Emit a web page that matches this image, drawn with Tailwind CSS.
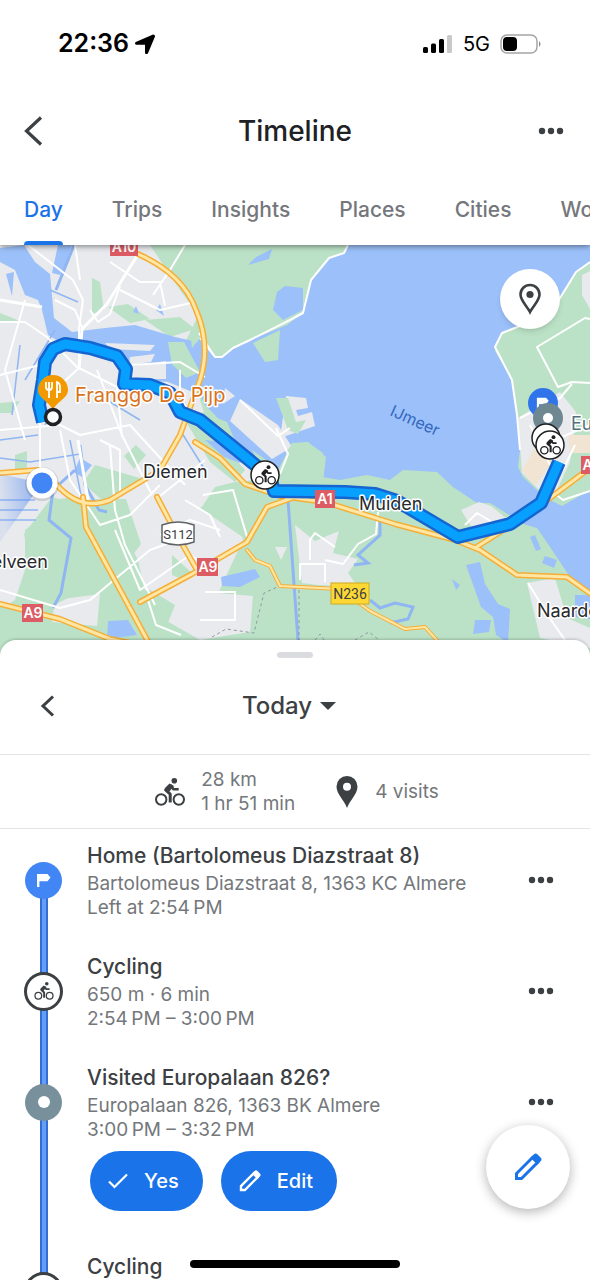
<!DOCTYPE html>
<html lang="en">

<head>
  <meta charset="UTF-8" />
  <meta name="viewport" content="width=device-width, initial-scale=1" />
  <title>Timeline</title>
  <script src="https://cdn.jsdelivr.net/npm/@tailwindcss/browser@4"></script>
</head>

<body class="bg-white font-['Inter','Liberation_Sans',sans-serif] text-[#3c4043]">
  <!-- Shared icons -->
  <svg class="hidden">
    <symbol id="bike" viewBox="0 0 30 28">
      <g fill="none" stroke="currentColor" stroke-linejoin="round">
        <circle cx="6.200" cy="21.5" r="5.200" stroke-width="2" />
        <circle cx="23.800" cy="21.5" r="5.200" stroke-width="2" />
        <path d="M15.5 7.2L10.6 12l4.6 4.2V24.500" stroke-width="3" />
        <path d="M15.5 7l3 4.2h5.2" stroke-width="2.600" />
      </g>
      <path d="M9.500 10.500l5-5 4.500 2.500-5 6z" fill="currentColor" />
      <circle cx="19.300" cy="2.800" r="2.800" fill="currentColor" />
    </symbol>
    <symbol id="dots" viewBox="0 0 26 8">
      <g fill="currentColor">
        <circle cx="4" cy="4" r="3.200" />
        <circle cx="13" cy="4" r="3.200" />
        <circle cx="22" cy="4" r="3.200" />
      </g>
    </symbol>
    <symbol id="pencil" viewBox="0 0 28 28">
      <path d="M2.500 25.500v-5L18.500 4.500l5 5-16 16z" fill="none" stroke="currentColor" stroke-width="3" />
      <path d="M16.500 4.600l3.300-3.200a2.600 2.600 0 0 1 3.700 0l3.100 3.100a2.600 2.600 0 0 1 0 3.700l-3.200 3.300z" fill="currentColor" />
    </symbol>
    <symbol id="flag" viewBox="0 0 16 16">
      <path d="M1 2h10.500l3 3.500-3 3.800H3.400V15H1z" fill="currentColor" />
    </symbol>
  </svg>

  <div class="relative flex h-screen flex-col overflow-hidden">
    <header class="relative z-10 bg-white shadow-[0_1px_6px_rgba(0,0,0,0.5)]">
      <!-- Status bar -->
      <div class="flex h-22 items-center justify-between pr-12 pl-[58px] text-black">
        <div class="flex items-center gap-1">
          <span class="text-[25px] font-semibold">22:36</span>
          <svg class="size-6" viewBox="0 0 24 24">
            <path d="M19.500 2.800a1.700 1.700 0 0 1 2.300 2.300L15.100 20.900c-.800 1.800-3.100 1.500-3.100-.500v-7.600H3.900c-2.100 0-2.500-2.300-.600-3.100z" fill="currentColor" />
          </svg>
        </div>
        <div class="flex items-center gap-2">
          <svg class="h-5 w-8" viewBox="0 0 32 20">
            <rect y="13" width="5" height="6" rx="1.500" />
            <rect x="8" y="9.500" width="5" height="9.500" rx="1.500" />
            <rect x="16" y="5" width="5" height="14" rx="1.500" />
            <rect x="24" y="1" width="5" height="18" rx="1.500" fill="#c9c9cb" />
          </svg>
          <span class="text-xl">5G</span>
          <svg class="h-6 w-11" viewBox="0 0 44 24">
            <rect x="3" y="3" width="36" height="18" rx="6" fill="none" stroke="#a5a5a8" stroke-width="1.500" />
            <rect x="5" y="5" width="14" height="14" rx="4" />
            <path d="M41 9q3 3 0 6z" fill="#8c8c90" />
          </svg>
        </div>
      </div>

      <!-- Title bar -->
      <div class="flex h-[86px] items-center justify-between px-6">
        <button class="w-8" aria-label="Back">
          <svg class="h-8 w-5" viewBox="0 0 20 32">
            <path d="M17 2.500L2.500 16l14.500 13.500" fill="none" stroke="currentColor" stroke-width="3.200" />
          </svg>
        </button>
        <h1 class="text-[28px] font-medium text-[#202124]">Timeline</h1>
        <button class="w-8" aria-label="More options"><svg class="ml-1 h-2 w-[26px]"><use href="#dots" /></svg></button>
      </div>

      <!-- Tabs -->
      <nav class="flex h-[71px] gap-[49px] overflow-hidden px-6 text-[21px] font-medium whitespace-nowrap text-[#74777b]">
        <a href="#" class="relative flex items-center text-[#1a73e8]">Day
          <span class="absolute inset-x-0 bottom-0 h-1 rounded-t bg-[#1a73e8]"></span>
        </a>
        <a href="#" class="flex items-center">Trips</a>
        <a href="#" class="flex items-center">Insights</a>
        <a href="#" class="flex items-center">Places</a>
        <a href="#" class="flex items-center">Cities</a>
        <a href="#" class="flex items-center">World</a>
      </nav>
    </header>

    <!-- Map -->
    <section class="relative shrink-0" aria-label="Map">
      <svg class="block w-full" viewBox="0 245 590 411">
        <defs>
          <linearGradient id="beam" x1="1" y1="0" x2="0" y2="0.200">
            <stop offset="0" stop-color="#5b8ef0" stop-opacity="0.700" />
            <stop offset="1" stop-color="#5b8ef0" stop-opacity="0.100" />
          </linearGradient>
        </defs>
        <rect y="245" width="590" height="411" fill="#bbe2c6" />

        <!-- Built-up areas -->
        <g fill="#e8eaed">
          <path d="M0 245H150L180 290 196 312 196 320 184 345 206 375 200 400 208 425 250 466 256 480 235 482 215 487 200 510 235 505 243 540 215 600 205 600 250 605 246 632 200 640 165 620 160 605 147 600 138 560 130 545 115 525 95 500 75 497 52 500 45 515 25 530 25 570 15 600 0 610Z" />
          <path d="M55 600l45-6-3 32-45-4zM205 592l48 4-3 36-40 6zM295 525l20 16 24-10-6 22 25 6-10 14 10 14-40-2-16-2zM275 547h12l-6 13zM527 583l28-5 12 40 23 10v20l-50-10z" />
        </g>

        <!-- Parks -->
        <g fill="#bbe2c6">
          <path d="M92 278l8 4 4 28-12 4zM108 307l20-3 22 15-20 4zM0 313l20 8-22 2zM0 403l20-2-8 12H0zM145 320l35-3 15 12-25 8zM15 455l12-4v18l-12 2zM124 456l12-11 10 10-12 14zM95 465l48 14-40 22-20-18zM52 497l22 6 22-4 30 0 15 45-15 20-30 20-40 20-20-10-12-60zM150 590l25 15-10 25 20 25h-60l-20-60zM0 605l45 30v20H0zM185 420l20 5 40 45-10 12-25-20zM200 508l22-15 18 15 4 30zM172 555l20 18-10 6-10-4z" />
        </g>

        <!-- Water -->
        <g fill="#9cc0f9">
          <path d="M0 248L24 245 35 262 50 274 54 318 72 332 105 328 135 325 175 337 197 342 200 335 206 345 215 357 222 357 233 348 250 340 287 325 300 315 303 313 311 280 329 258 344 252 348 245H590V595L568 574 550 547 537 528 523 524 517 520 490 503 477 503 453 487 437 472 403 470 390 480 367 475 340 480 322 477 323 453 307 442 292 443 278 470 262 474 235 440 215 415 205 405 200 395 168 382 140 380 132 365 115 352 80 342 60 342 48 335 42 310 38 300 25 295 15 270 0 262Z" />
          <path d="M58 245h14l-6 18-6 12-8-2zM6 274l8-2-2 24zM273 310l4-18 8-6 18 2v22l-20 10zM248 265l8-8 16-8-3 10zM80 458l12 7-10 12-8-5zM108 621l20-1 9 15-30 4zM221 577l34-8 5 8-20 10-18-1zM466 565l14-3 5 22 13 20 12 5-2 34-12-8-3-18-12-10zM452 579l8 6-4 5zM475 620h16l-2 12-16 2zM575 595l15 0v24l-15-2zM205 440l25 3 20 8-10 12-16-6zM156 310l4-6 4 12zM133 312l3-6 3 8z" />
        </g>
        <g fill="none" stroke="#8fb5f3">
          <path d="M74 245l-18 45M80 445l5 40 14 25 8 2M75 470l-22 20-4 30 22 18-10 55-8 15M288 500l10 140M380 520v15l-22 20 10 8-14 2M370 600l10 8 15-5 18 4-5 12-18 4" stroke-width="3" />
          <path d="M0 458l30 4 50-8M50 290l28 12M65 380l-20 45M70 440l18 90M180 430l25 40M20 345l-8 70M90 390l50 30M55 330l-30 50M0 500h35M0 510h38M0 520h36M0 440l38-5" stroke-width="1.500" />
        </g>

        <!-- Almere -->
        <path d="M590 262L576 272 560 298 545 320 520 326 502 333 496 345 495 351 512 380 517 415 520 450 518 467 523 477 537 490 550 500 562 506 590 490Z" fill="#bbe2c6" />
        <path d="M590 271l-8 4 0 20 8 14zM518 418l42-26 16 20-6 50-14 30-18-3-16-16z" fill="#e8eaed" />
        <path d="M522 470l13-22 20 10-20 28zM568 435h22v18h-20z" fill="#f1e4d2" />
        <path d="M461 510l18-8 12 4 15 12-10 6-24 4z" fill="#e8eaed" />
        <path d="M535 535l6 14-5 2-6-14zM545 556l12 4-3 8-12-5z" fill="#9cc0f9" />

        <!-- Harbour islands -->
        <g fill="#e8eaed">
          <path d="M105 343l50 2-5 6-40-2zM130 357l25-3-4 8-22 3zM132 366l34-5v18h-30zM225 388l10 8-12 8zM240 399l38 26 14 22-20 12-42-38zM286 396l20 2 2 10-12 2 2 6 14-4 3 14-35 12zM90 315l20 4 12 4-10 4h-20z" />
        </g>
        <g fill="#bbe2c6">
          <path d="M276 398l12 0 8 24 10-2-8 14-10-4zM290 446l18-4 18 15-3 25-30-2-10-18zM253 343l27-13-2 30-13 2zM202 412l25 10 12 28-30-26zM252 450l20 14-10 5zM168 342l16 0 16 30-14 6-14-14zM190 332l8-8 2 14-8 10z" />
        </g>

        <!-- Streets -->
        <g fill="none" stroke="#fff" stroke-linejoin="round">
          <path d="M28 245l45 35 10 20-4 28 0 40-22 20-20 12M0 322h25l22 15 30 30 40 20 5 50M25 300l-20 70 20 70M0 375l48-12M75 245l5 35M120 290l40 20 35-8M110 262l30 20 20 0 5 24M185 245l-15 25-17 25M215 357l-16-24M348 245L344 253 329 258 311 280 303 313 290 320 250 340 233 348 222 357H215L200 338M100 440l20 10v45M0 430l60-5 20 10 50-10 55 60M40 420v70M60 430l10 50 30 45 30-10 30-30M97 370l25 65 30 60M130 365l50-3 25 15M180 370v28l10 15M110 445l5 65 10 35 30 60M115 530l25 60 50-35 15 10M148 600l8 25 25 10M0 590l60 18 30-8 60-50 40-15M185 500l25 15 10 22M160 535l30-15 30 10M203 495l30-5 15 50M205 592h30v28h-35M310 560v-20l5-7 20 14M300 580v-16h25v18M325 560l18 4 15-20 18-10 2-22M465 525l12-12 25 15M528 583l25 40 12 17M240 400l38 36 12-8M276 428l12 26-8 20M155 500l50-40M90 310l8 12 12-8 10-28M55 300l20 10 8 20" stroke-width="2" />
          <path d="M590 262L576 272 560 298 545 320 520 326 502 333 495 347 512 380 517 415 520 450M590 319l-5-1-48 29 21 40 14-5 18 1M520 418l40-20 12-14M530 425l20 40M555 440l35-15M553 492l10 8 27-9M575 445l-12 25" stroke-width="2" />
          <path d="M137 256l-30 48-25 25-3 40M0 300l42 7M78 440l10 60" stroke-width="3" />
        </g>
        <path d="M212 637l14-8 28 4 10-40 18-8M315 640l5-6 4 6M355 640l14-8 10 8M299 590v66" fill="none" stroke="#8e9aa3" stroke-dasharray="3 3" />

        <!-- Main roads, orange casing below a pale core -->
        <g fill="none" stroke-linecap="round" stroke-linejoin="round">
          <path d="M138 254q45 20 58 56 15 35 4 70l-20 55-20 35-50 30q-30 12-55-17L38 470 0 473M0 604l60 15 50 20 40 8M83 497l3 30 65 120M157 497l20 38 20 35M140 602l52-28 55-32 20-35 25-9M195 442l25 16 25 26 35 12 45 6 70 22 60 16 25 10 37 25 50 2 28 20M475 548l55-35 60-45" stroke="#f5ae38" stroke-width="6" />
          <path d="M138 254q45 20 58 56 15 35 4 70l-20 55-20 35-50 30q-30 12-55-17L38 470 0 473M0 604l60 15 50 20 40 8M83 497l3 30 65 120M157 497l20 38 20 35M140 602l52-28 55-32 20-35 25-9M195 442l25 16 25 26 35 12 45 6 70 22 60 16 25 10 37 25 50 2 28 20M475 548l55-35 60-45" stroke="#ffe7a3" stroke-width="3" />
          <path d="M247 550l8 10 15 6 10 20 60 3 30 22 35 18 20-2 18 20" stroke="#f5ae38" stroke-width="4" />
          <path d="M247 550l8 10 15 6 10 20 60 3 30 22 35 18 20-2 18 20" stroke="#ffe7a3" stroke-width="2" />
        </g>

        <!-- Route -->
        <g fill="none" stroke-linejoin="round">
          <path d="M43 422L39 405 43 380 45 362 53 349 65 344 90 348 117 356 126 369 124 384 150 385 170 393 180 412 200 420 232 446 270 477 274 491 345 492 375 494 397 501 458 537 510 524 541 503 559 462" stroke="#1565d0" stroke-width="14" />
          <path d="M43 422L39 405 43 380 45 362 53 349 65 344 90 348 117 356 126 369 124 384 150 385 170 393 180 412 200 420 232 446 270 477 274 491 345 492 375 494 397 501 458 537 510 524 541 503 559 462" stroke="#08a0ff" stroke-width="9" />
        </g>

        <!-- Current position -->
        <path d="M42 483L0 474v68z" fill="url(#beam)" />
        <circle cx="42" cy="484" r="17" fill="#000" opacity="0.120" />
        <circle cx="42" cy="483" r="15.500" fill="#fff" />
        <circle cx="42" cy="483" r="10.500" fill="#4285f4" />

        <!-- Road shields -->
        <g font-size="14" font-weight="600" text-anchor="middle" fill="#fff">
          <rect x="110" y="237" width="28" height="19" fill="#dd5c64" /><text x="124" y="252">A10</text>
          <rect x="315" y="490" width="20" height="18" fill="#dd5c64" /><text x="325" y="504">A1</text>
          <rect x="197" y="558" width="21" height="18" fill="#dd5c64" /><text x="208" y="572">A9</text>
          <rect x="22" y="604" width="21" height="18" fill="#dd5c64" /><text x="33" y="618">A9</text>
          <rect x="581" y="456" width="21" height="18" fill="#dd5c64" /><text x="592" y="470">A6</text>
        </g>
        <g font-size="14" text-anchor="middle" fill="#3c4043" class="font-['Roboto','Inter',sans-serif]">
          <path d="M162 525q8-3 16-3t16 3v17q-8 3-16 3t-16-3z" fill="#fff" stroke="#5f6368" stroke-width="1.500" />
          <text x="178" y="539" font-size="13">S112</text>
          <rect x="331" y="583" width="38" height="21" fill="#fdd835" stroke="#d0a822" />
          <text x="350" y="599">N236</text>
        </g>

        <!-- Place names -->
        <g font-size="18" fill="#28292c" stroke="#fff" stroke-width="3" stroke-linejoin="round" class="[paint-order:stroke]">
          <text x="143" y="478">Diemen</text>
          <text x="359" y="510">Muiden</text>
          <text x="48" y="568" text-anchor="end">Amstelveen</text>
          <text x="537" y="617">Naarden</text>
          <text x="571" y="430" fill="#55707d">Europalaan</text>
          <text x="75" y="402" font-size="20" fill="#d9731a">Franggo De Pijp</text>
        </g>
        <text x="389" y="415" font-size="16" fill="#3268c0" transform="rotate(24 389 415)">IJmeer</text>

        <!-- Restaurant pin and start point -->
        <path d="M53 411c-2-9-15-12-15-21a15 15 0 0 1 30 0c0 9-13 12-15 21z" fill="#f29900" />
        <path d="M46 382v5q0 3 3 3t3-3v-5M49 382v16M57 398v-16q3 1 3 5v5h-3" fill="none" stroke="#fff" stroke-width="1.800" />
        <circle cx="53" cy="417" r="7.500" fill="#fff" stroke="#202124" stroke-width="3.500" />

        <!-- Stops -->
        <g class="text-[#202124]">
          <circle cx="265" cy="475" r="14" fill="#fff" stroke="currentColor" stroke-width="1.500" />
          <use href="#bike" x="255" y="465" width="21" height="20" />
          <circle cx="543" cy="403" r="15" fill="#2f74ea" />
          <use href="#flag" x="536" y="396" width="14" height="14" class="text-white" />
          <circle cx="548" cy="418" r="15" fill="#6f8791" />
          <circle cx="548" cy="418" r="5" fill="#fff" />
          <circle cx="546" cy="438" r="14" fill="#fff" stroke="currentColor" stroke-width="1.500" />
          <circle cx="550" cy="445" r="14" fill="#fff" stroke="currentColor" stroke-width="1.500" />
          <use href="#bike" x="540" y="435" width="21" height="20" />
        </g>
      </svg>
      <button class="absolute top-6 right-[30px] flex size-15 items-center justify-center rounded-full bg-white shadow-md" aria-label="Show places">
        <svg class="h-8 w-6" viewBox="0 0 24 32">
          <path d="M12 29C9 23 2.500 17.500 2.500 11.500a9.500 9.500 0 0 1 19 0C21.500 17.500 15 23 12 29z" fill="none" stroke="currentColor" stroke-width="2.600" />
          <circle cx="12" cy="11.500" r="3.600" fill="currentColor" />
        </svg>
      </button>
    </section>

    <!-- Bottom sheet -->
    <main class="relative -mt-4 flex-1 rounded-t-2xl bg-white shadow-[0_-1px_3px_rgba(0,0,0,0.2)]">
      <div class="mx-auto h-[18px] w-9 pt-3">
        <div class="h-1.5 rounded-full bg-[#dadce0]"></div>
      </div>
      <div class="flex h-24 items-center justify-center pr-3">
        <button class="absolute left-10" aria-label="Previous day">
          <svg class="h-6 w-4" viewBox="0 0 16 24">
            <path d="M13 2.500L3 12l10 9.500" fill="none" stroke="currentColor" stroke-width="3" />
          </svg>
        </button>
        <button class="flex items-center gap-2 text-2xl font-medium">Today
          <svg class="h-2 w-4" viewBox="0 0 16 8"><path d="M0 0h16L8 8z" fill="currentColor" /></svg>
        </button>
      </div>

      <!-- Day summary -->
      <div class="flex h-[75px] items-center justify-center gap-10 border-y border-[#e3e4e6] pl-1 text-[19px] leading-6 text-[#74777b]">
        <div class="flex items-center gap-4">
          <svg class="h-7 w-[30px] text-[#3c4043]"><use href="#bike" /></svg>
          <p>28 km<br>1 hr 51 min</p>
        </div>
        <div class="flex items-center gap-4">
          <svg class="h-8 w-6 text-[#3c4043]" viewBox="0 0 24 32">
            <path fill-rule="evenodd" d="M12 32C9 24 1.500 18 1.500 10.500a10.500 10.500 0 0 1 21 0C22.500 18 15 24 12 32zM12 6.800a4 4 0 1 0 0 8 4 4 0 0 0 0-8z" fill="currentColor" />
          </svg>
          <p>4 visits</p>
        </div>
      </div>

      <!-- Visits and trips -->
      <ol class="pt-[11px] text-[19px] leading-6 text-[#74777b]">
        <li class="relative flex pb-8">
          <span class="absolute top-10 bottom-0 left-10 w-2 border-x-2 border-[#2f6fd6] bg-[#669df6]"></span>
          <div class="relative flex h-20 w-[87px] shrink-0 items-center pl-[25px]">
            <span class="flex size-[37px] items-center justify-center rounded-full bg-[#4285f4] text-white"><svg class="size-4"><use href="#flag" /></svg></span>
          </div>
          <div class="flex-1">
            <h2 class="text-[21px] leading-8 font-medium text-[#3c4043]">Home (Bartolomeus Diazstraat 8)</h2>
            <p>Bartolomeus Diazstraat 8, 1363 KC Almere</p>
            <p>Left at 2:54&#8239;PM</p>
          </div>
          <button class="mr-9 h-20 text-[#3c4043]" aria-label="More options"><svg class="h-2 w-[26px]"><use href="#dots" /></svg></button>
        </li>
        <li class="relative -mt-px flex pb-8">
          <span class="absolute top-0 bottom-0 left-10 w-2 border-x-2 border-[#2f6fd6] bg-[#669df6]"></span>
          <div class="relative flex h-20 w-[87px] shrink-0 items-center pl-6">
            <span class="flex size-[39px] items-center justify-center rounded-full border-3 border-[#3c4043] bg-white text-[#3c4043]"><svg class="h-[18px] w-5"><use href="#bike" /></svg></span>
          </div>
          <div class="flex-1">
            <h2 class="text-[21px] leading-8 font-medium text-[#3c4043]">Cycling</h2>
            <p>650 m · 6 min</p>
            <p>2:54&#8239;PM – 3:00&#8239;PM</p>
          </div>
          <button class="mr-9 h-20 text-[#3c4043]" aria-label="More options"><svg class="h-2 w-[26px]"><use href="#dots" /></svg></button>
        </li>
        <li class="relative -mt-px flex pb-10">
          <span class="absolute top-0 bottom-0 left-10 w-2 border-x-2 border-[#2f6fd6] bg-[#669df6]"></span>
          <div class="relative flex h-20 w-[87px] shrink-0 items-center pl-[25px]">
            <span class="flex size-[37px] items-center justify-center rounded-full bg-[#78909c]"><span class="size-3 rounded-full bg-white"></span></span>
          </div>
          <div class="flex-1">
            <h2 class="text-[21px] leading-8 font-medium text-[#3c4043]">Visited Europalaan 826?</h2>
            <p>Europalaan 826, 1363 BK Almere</p>
            <p>3:00&#8239;PM – 3:32&#8239;PM</p>
            <div class="mt-[9px] ml-[3px] flex gap-[18px] text-xl font-medium text-white">
              <button class="flex h-15 items-center gap-4 rounded-full bg-[#1a73e8] px-[18px] pr-6">
                <svg class="h-4 w-5" viewBox="0 0 20 16"><path d="M1 8.500l5.500 5.500L19 1.500" fill="none" stroke="currentColor" stroke-width="2.200" /></svg>Yes
              </button>
              <button class="flex h-15 items-center gap-4 rounded-full bg-[#1a73e8] px-[18px] pr-6">
                <svg class="size-[22px]"><use href="#pencil" /></svg>Edit
              </button>
            </div>
          </div>
          <button class="mr-9 h-20 text-[#3c4043]" aria-label="More options"><svg class="h-2 w-[26px]"><use href="#dots" /></svg></button>
        </li>
        <li class="relative flex">
          <span class="absolute top-0 left-10 h-10 w-2 border-x-2 border-[#2f6fd6] bg-[#669df6]"></span>
          <div class="relative flex h-20 w-[87px] shrink-0 items-center pl-6">
            <span class="flex size-[39px] items-center justify-center rounded-full border-3 border-[#3c4043] bg-white text-[#3c4043]"><svg class="h-[18px] w-5"><use href="#bike" /></svg></span>
          </div>
          <h2 class="text-[21px] leading-8 font-medium text-[#3c4043]">Cycling</h2>
        </li>
      </ol>
    </main>

    <button class="absolute right-5 bottom-[71px] flex size-[84px] items-center justify-center rounded-full bg-white text-[#1a73e8] shadow-[0_3px_12px_rgba(0,0,0,0.3)]" aria-label="Edit day">
      <svg class="size-7"><use href="#pencil" /></svg>
    </button>
    <div class="absolute bottom-3 left-1/2 h-2 w-[210px] -translate-x-1/2 rounded-full bg-black"></div>
  </div>
</body>

</html>
